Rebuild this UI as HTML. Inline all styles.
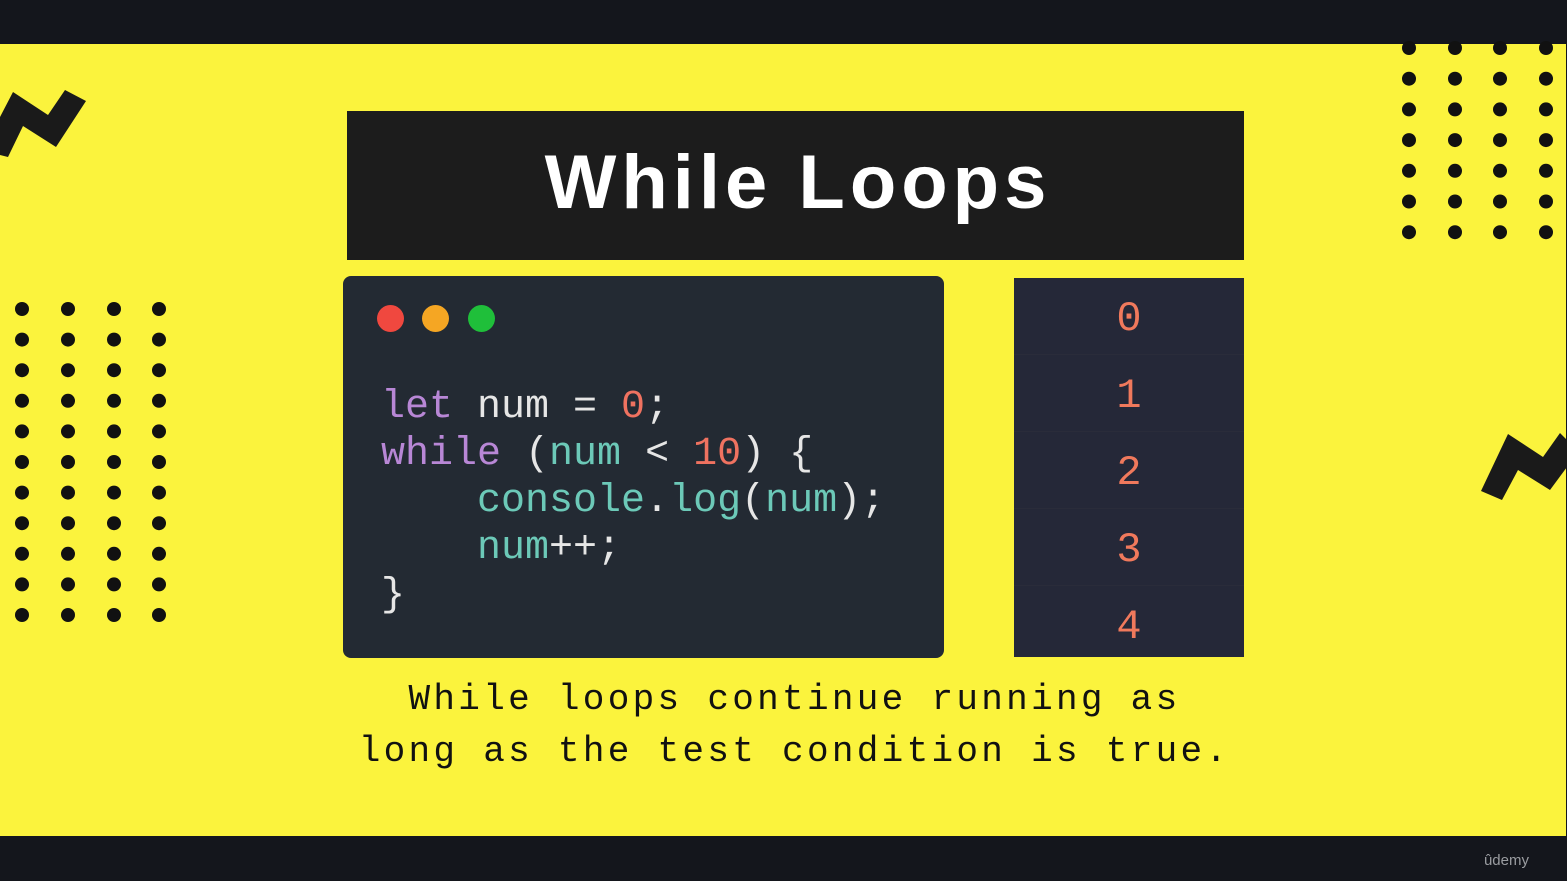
<!DOCTYPE html>
<html><head><style>
*{margin:0;padding:0;box-sizing:border-box}
body{width:1567px;height:881px;background:#14161c;position:relative;overflow:hidden;font-family:"Liberation Sans",sans-serif}
.y{position:absolute;left:0;top:44px;width:1566px;height:792px;background:#fbf33d}
.title{position:absolute;left:347px;top:111px;width:897px;height:149px;background:#1c1c1c;color:#fff;font-weight:bold;font-size:76px;text-align:center;line-height:144px;letter-spacing:5px;padding-left:5px}
.code{position:absolute;left:343px;top:276px;width:601px;height:382px;background:#232a33;border-radius:8px}
.dot{position:absolute;width:27px;height:27px;border-radius:50%;top:305px}
.c{position:absolute;left:381px;top:384px;font-family:"Liberation Mono","DejaVu Sans Mono",monospace;font-size:40px;line-height:47px;color:#e6e6e6;white-space:pre}
.k{color:#b887d6}.n{color:#ef7260}.t{color:#6cc9b8}
.out{position:absolute;left:1014px;top:278px;width:230px;height:379px;background:#252838}
.out div{height:77px;line-height:82px;text-align:center;color:#f0795c;font-family:"Liberation Mono",monospace;font-size:42px;border-bottom:1px solid #2a2c3a}
.cap{position:absolute;left:0;width:1567px;padding-left:22px;text-align:center;font-family:"Liberation Mono",monospace;font-size:36px;letter-spacing:3.3px;color:#111}
.ud{position:absolute;right:38px;top:852px;color:#9a9ca0;font-size:15px}
</style></head><body>
<div class="y"></div>
<svg width="1567" height="881" style="position:absolute;left:0;top:0">
<g fill="#1a1a1a">
<polygon points="0,117 13,92 48,115 65,90 86,101 56,147 23,126 8,157 0,155"/>
<polygon points="1481,491 1508,434 1543,457 1560,433 1567,440 1567,467 1550,490 1518,470 1502,500"/>
</g>
<defs>
<g id="col11" fill="#111"><circle cx="0" cy="309" r="7"/><circle cx="0" cy="339.6" r="7"/><circle cx="0" cy="370.2" r="7"/><circle cx="0" cy="400.8" r="7"/><circle cx="0" cy="431.4" r="7"/><circle cx="0" cy="462" r="7"/><circle cx="0" cy="492.6" r="7"/><circle cx="0" cy="523.2" r="7"/><circle cx="0" cy="553.8" r="7"/><circle cx="0" cy="584.4" r="7"/><circle cx="0" cy="615" r="7"/></g>
<g id="col7" fill="#111"><circle cx="0" cy="48" r="7"/><circle cx="0" cy="78.7" r="7"/><circle cx="0" cy="109.4" r="7"/><circle cx="0" cy="140.1" r="7"/><circle cx="0" cy="170.8" r="7"/><circle cx="0" cy="201.5" r="7"/><circle cx="0" cy="232.2" r="7"/></g>
</defs>
<use href="#col11" x="22"/><use href="#col11" x="68"/><use href="#col11" x="114"/><use href="#col11" x="159"/>
<use href="#col7" x="1409"/><use href="#col7" x="1455"/><use href="#col7" x="1500"/><use href="#col7" x="1546"/>
</svg>
<div class="title">While Loops</div>
<div class="code"></div>
<div class="dot" style="left:377px;background:#f0483f"></div>
<div class="dot" style="left:422px;background:#f5a623"></div>
<div class="dot" style="left:468px;background:#1fbf3a"></div>
<div class="c"><span class="k">let</span> num = <span class="n">0</span>;
<span class="k">while</span> (<span class="t">num</span> &lt; <span class="n">10</span>) {
    <span class="t">console</span>.<span class="t">log</span>(<span class="t">num</span>);
    <span class="t">num</span>++;
}</div>
<div class="out"><div>0</div><div>1</div><div>2</div><div>3</div><div style="border:0">4</div></div>
<div class="cap" style="top:679px">While loops continue running as</div>
<div class="cap" style="top:731px">long as the test condition is true.</div>
<div class="ud">ûdemy</div>
</body></html>
